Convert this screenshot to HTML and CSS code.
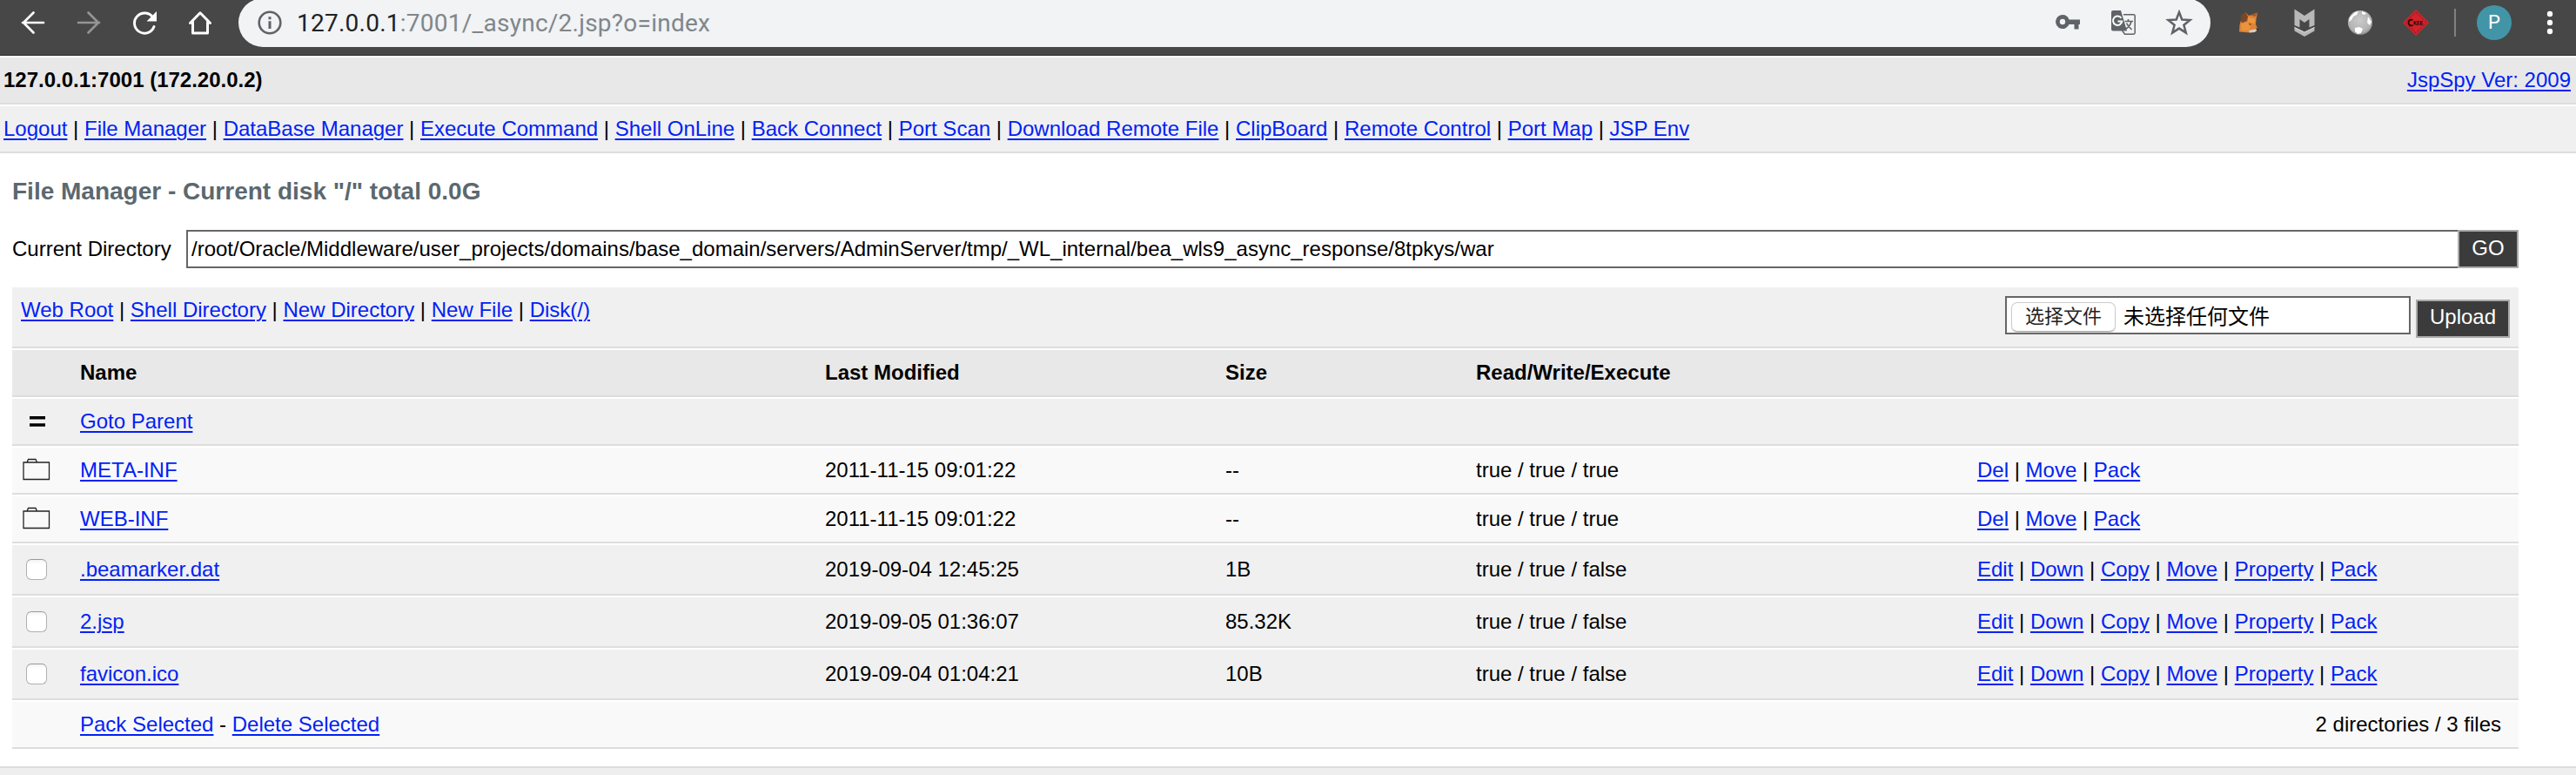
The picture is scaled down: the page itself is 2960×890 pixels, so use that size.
FILE: index.html
```html
<!DOCTYPE html>
<html lang="zh-CN">
<head>
<meta charset="utf-8">
<title>JspSpy</title>
<link rel="stylesheet" href="styles.css">
</head>
<body>
<header class="toolbar">
  <div class="cell"><svg width="28" height="28" viewBox="0 0 28 28" fill="none" stroke="#fff" stroke-width="2.7" stroke-linecap="round"><path d="M26 14H2M14.500 2.500L3 14L14.500 25.500"/></svg></div>
  <div class="cell"><svg width="28" height="28" viewBox="0 0 28 28" fill="none" stroke="#949494" stroke-width="2.700" stroke-linecap="round"><path d="M2 14H26M13.500 2.500L25 14L13.500 25.500"/></svg></div>
  <div class="cell"><svg width="28" height="28" viewBox="0 0 28 28" fill="none"><path d="M23.800 8.200A11.600 11.600 0 1 0 25 18.500" stroke="#fff" stroke-width="2.900" stroke-linecap="round"/><path d="M28 1V12.500H16.500Z" fill="#fff"/></svg></div>
  <div class="cell"><svg width="28" height="28" viewBox="0 0 28 28" fill="none" stroke="#fff" stroke-width="3" stroke-linejoin="round" stroke-linecap="round"><path d="M2.500 14.500L14 2.800L25.500 14.500M5.500 13V26H22.500V13"/></svg></div>
  <div class="omnibox">
    <svg class="info" width="28" height="28" viewBox="0 0 28 28"><circle cx="14" cy="14" r="12.300" fill="none" stroke="#5f6368" stroke-width="2.600"/><path d="M12.500 7.300h3v3h-3zM12.500 12.300h3v8.700h-3z" fill="#5f6368"/></svg>
    <span class="url"><b>127.0.0.1</b>:7001/_async/2.jsp?o=index</span>
    <div class="cell"><svg width="28" height="28" viewBox="0 0 28 28" fill="#5f6368"><path fill-rule="evenodd" d="M8 5a8 8 0 1 0 7.500 11H21.500v5.500h5V16H28v-5.500H15.500A8 8 0 0 0 8 5zM8 9.800a3.200 3.200 0 1 1 0 6.400a3.200 3.200 0 0 1 0-6.400z"/></svg></div>
    <div class="cell"><svg width="28" height="28" viewBox="0 0 28 28"><path d="M14 4.700H25.500A1.700 1.700 0 0 1 27.200 6.400V25.500A1.700 1.700 0 0 1 25.500 27.200H15.500L12.500 23" fill="#f1f3f4" stroke="#5f6368" stroke-width="1.500"/><path d="M2 0H11L18 23.500H2A2 2 0 0 1 0 21.500V2A2 2 0 0 1 2 0Z" fill="#5f6368"/><path d="M11.500 8.800A5.200 5.200 0 1 0 12.300 12.500H7.500" fill="none" stroke="#fff" stroke-width="2"/><path d="M15.500 12.500H25M19.500 10V12.500M23 12.500C22 17 19 20 15.800 21.700M17.500 14.500C19 18 21.500 20 23.500 22" fill="none" stroke="#5f6368" stroke-width="1.600"/></svg></div>
    <div class="cell"><svg width="32" height="30" viewBox="0 0 32 30"><path d="M16 3L19.300 11.500L28.500 12L21.400 17.800L23.800 26.600L16 21.600L8.200 26.600L10.600 17.800L3.500 12L12.700 11.500Z" fill="none" stroke="#5f6368" stroke-width="2.500"/></svg></div>
  </div>
  <div class="extensions">
    <div class="cell"><svg width="24" height="26" viewBox="0 0 24 26"><path d="M3 10L8 1L12 5L22 1.500L20.500 9L20 15L22.500 20.500L19 23L13 24.500L1 23.500L1.500 16Z" fill="#df8336"/><path d="M3 12L3 5L8 .500L11 6L10 11L5 13Z" fill="#7a4726"/><path d="M13.500 4.500L22.500 1.500L19.500 6Z" fill="#a05a2b"/><path d="M11 7L20 9L18 14L11 12Z" fill="#f0963f"/><path d="M3 15L10 12L14 18L12 22L4 22Z" fill="#ea9440"/><path d="M12 22L19 20.500L22 21L19 24L13 24.500Z" fill="#d8cdc4"/><path d="M20 19.500L23 20L22 22Z" fill="#151515"/><path d="M12 14L15 14.500L13.500 16Z" fill="#6b4021"/></svg></div>
    <div class="cell"><svg width="24" height="32" viewBox="0 0 24 32"><path d="M.500.500L12 8L23.500.500V19L17.500 21.500V12L12 16L6.500 12V21.500L.500 19Z" fill="#b8b8b8"/><path d="M.500 21L12 27L23.500 21V25.500L12 32L.500 25.500Z" fill="#b8b8b8"/><path d="M.500 21.500L12 27L23.500 21.500" fill="none" stroke="#ddd"/></svg></div>
    <div class="cell"><svg width="30" height="30" viewBox="0 0 30 30"><defs><radialGradient id="ball" cx=".48" cy=".4" r=".6"><stop offset="0" stop-color="#cacaca"/><stop offset=".8" stop-color="#b2b2b2"/><stop offset="1" stop-color="#8a8a8a"/></radialGradient></defs><circle cx="15" cy="15" r="14" fill="url(#ball)"/><path d="M3 9L9 3L13 2L11 6L7 8L5 12L2 14ZM17 2L22 4L20 6L17 5ZM24 8L28 14L26 18L23 15ZM9 21L14 20L18 22L16 27L12 28L9 25Z" fill="#fff"/></svg></div>
    <div class="cell"><svg width="32" height="32" viewBox="0 0 32 32"><path d="M16 1L31 16L16 31L1 16Z" fill="#d3222a"/><path d="M16 4L28 16L16 28L4 16Z" fill="none" stroke="#5a1518" stroke-width=".9" stroke-dasharray="1 1"/><path d="M12.500 13A3.400 3.400 0 1 0 12.500 19" stroke="#140808" stroke-width="1.800" fill="none"/><text x="13" y="18.500" textLength="11" lengthAdjust="spacingAndGlyphs" class="badge">KEE</text></svg></div>
  </div>
  <i class="divider"></i>
  <span class="avatar">P</span>
  <svg class="dots" width="8" height="28" viewBox="0 0 8 28" fill="#fff"><circle cx="4" cy="4" r="3.200"/><circle cx="4" cy="14" r="3.200"/><circle cx="4" cy="24" r="3.200"/></svg>
</header>

<div class="bar bar-host"><b>127.0.0.1:7001 (172.20.0.2)</b><a href="#">JspSpy Ver: 2009</a></div>
<nav class="bar bar-nav"><span><a href="#">Logout</a> | <a href="#">File Manager</a> | <a href="#">DataBase Manager</a> | <a href="#">Execute Command</a> | <a href="#">Shell OnLine</a> | <a href="#">Back Connect</a> | <a href="#">Port Scan</a> | <a href="#">Download Remote File</a> | <a href="#">ClipBoard</a> | <a href="#">Remote Control</a> | <a href="#">Port Map</a> | <a href="#">JSP Env</a></span></nav>

<main class="content">
  <h2 class="title">File Manager - Current disk "/" total 0.0G</h2>
  <div class="directory">
    <span class="directory-label">Current Directory</span>
    <div class="path">/root/Oracle/Middleware/user_projects/domains/base_domain/servers/AdminServer/tmp/_WL_internal/bea_wls9_async_response/8tpkys/war</div>
    <div class="button go">GO</div>
  </div>

  <div class="table">
    <div class="row tools">
      <span class="tool-links"><a href="#">Web Root</a> | <a href="#">Shell Directory</a> | <a href="#">New Directory</a> | <a href="#">New File</a> | <a href="#">Disk(/)</a></span>
      <div class="file"><span class="choose">选择文件</span><span class="chosen">未选择任何文件</span></div>
      <div class="button upload">Upload</div>
    </div>
    <div class="row head"><span></span><b>Name</b><b>Last Modified</b><b>Size</b><b>Read/Write/Execute</b></div>
    <div class="row"><svg class="icon" width="18" height="14" viewBox="0 0 18 14"><path d="M0 1h18v3.500H0zM0 9.300h18v3.500H0z"/></svg><span><a href="#">Goto Parent</a></span></div>
    <div class="row light"><svg class="icon folder" width="32" height="26" viewBox="0 0 32 26"><path d="M1 5H30.500V24.500H1ZM5 5L6.500 1.500H15L16.500 5" fill="none" stroke="#222" stroke-width="1.300"/></svg><span><a href="#">META-INF</a></span><span>2011-11-15 09:01:22</span><span>--</span><span>true / true / true</span><span><a href="#">Del</a> | <a href="#">Move</a> | <a href="#">Pack</a></span></div>
    <div class="row light"><svg class="icon folder" width="32" height="26" viewBox="0 0 32 26"><path d="M1 5H30.500V24.500H1ZM5 5L6.500 1.500H15L16.500 5" fill="none" stroke="#222" stroke-width="1.300"/></svg><span><a href="#">WEB-INF</a></span><span>2011-11-15 09:01:22</span><span>--</span><span>true / true / true</span><span><a href="#">Del</a> | <a href="#">Move</a> | <a href="#">Pack</a></span></div>
    <div class="row tall"><i class="check"></i><span><a href="#">.beamarker.dat</a></span><span>2019-09-04 12:45:25</span><span>1B</span><span>true / true / false</span><span><a href="#">Edit</a> | <a href="#">Down</a> | <a href="#">Copy</a> | <a href="#">Move</a> | <a href="#">Property</a> | <a href="#">Pack</a></span></div>
    <div class="row tall"><i class="check"></i><span><a href="#">2.jsp</a></span><span>2019-09-05 01:36:07</span><span>85.32K</span><span>true / true / false</span><span><a href="#">Edit</a> | <a href="#">Down</a> | <a href="#">Copy</a> | <a href="#">Move</a> | <a href="#">Property</a> | <a href="#">Pack</a></span></div>
    <div class="row tall"><i class="check"></i><span><a href="#">favicon.ico</a></span><span>2019-09-04 01:04:21</span><span>10B</span><span>true / true / false</span><span><a href="#">Edit</a> | <a href="#">Down</a> | <a href="#">Copy</a> | <a href="#">Move</a> | <a href="#">Property</a> | <a href="#">Pack</a></span></div>
    <div class="row light summary"><span><a href="#">Pack Selected</a> - <a href="#">Delete Selected</a></span><span>2 directories / 3 files</span></div>
  </div>
</main>
<footer class="footer"></footer>
</body>
</html>
```
FILE: styles.css
```css
* { box-sizing: border-box; }

body {
  margin: 0;
  height: 890px;
  overflow: hidden;
  background: #fff;
  color: #000;
  font: 24px/28px "Liberation Sans", Arial, "Noto Sans CJK SC", sans-serif;
  white-space: nowrap;
}

a {
  color: #0022f5;
  text-decoration: underline;
  text-decoration-thickness: 2px;
  text-underline-offset: 3px;
}

svg { display: block; flex: none; }

/* Browser toolbar */
.toolbar {
  display: flex;
  height: 64px;
  padding-left: 6px;
  background: #474747;
  border-bottom: 1px solid #2b2b2b;
}

.cell {
  flex: none;
  display: flex;
  align-items: center;
  justify-content: center;
  width: 64px;
  height: 52px;
}

.omnibox {
  display: flex;
  align-items: center;
  width: 2266px;
  height: 56px;
  margin: -2px 0 0 12px;
  padding: 0 4px 0 22px;
  border-radius: 28px;
  background: #f1f3f4;
}

.info { margin-right: 17px; }

.url {
  flex: 1;
  padding-top: 2px;
  color: #80868b;
  font: 28px/32px Roboto, sans-serif;
  letter-spacing: 0.25px;
}

.url b { color: #202124; font-weight: 400; }

.extensions { display: flex; margin-left: 12px; }

.badge { font: bold 7px "Liberation Sans", sans-serif; fill: #140808; }

.divider { width: 2px; height: 32px; margin: 10px 24px 0 12px; background: #808080; }

.avatar {
  width: 40px;
  height: 40px;
  margin-top: 6px;
  border-radius: 50%;
  background: #4195a7;
  color: #fff;
  font: 22px/40px Roboto, sans-serif;
  text-align: center;
}

.dots { margin: 12px 0 0 40px; }

/* Page bars */
.bar {
  display: flex;
  align-items: center;
  justify-content: space-between;
  height: 54px;
  margin-top: 2px;
  padding: 0 6px 0 4px;
  border-bottom: 2px solid #ddd;
}

.bar-host { background: #e8e8e8; }
.bar-nav { background: #f0f0f0; }

/* File manager */
.content { width: 2894px; padding: 28px 0 0 14px; }

.title {
  margin: 0;
  color: #5b686f;
  font-size: 28px;
  line-height: 32px;
}

.directory { display: flex; align-items: center; margin-top: 28px; }
.directory-label { width: 200px; }

.path {
  flex: 1;
  height: 44px;
  padding-left: 4px;
  border: 2px solid #666;
  border-right: 0;
  line-height: 40px;
}

.button {
  height: 44px;
  border: 2px solid #aaa;
  background: #3b3b3b;
  color: #fff;
  line-height: 37px;
  text-align: center;
}

.go { width: 70px; }

.table { margin-top: 22px; }

.row {
  display: grid;
  grid-template-columns: 78px 856px 460px 288px 576px 1fr;
  align-items: center;
  height: 54px;
  margin-bottom: 2px;
  border-bottom: 2px solid #ddd;
  background: #f0f0f0;
}

.head { background: #e8e8e8; }
.light { background: #f9f9f9; }
.tall { height: 58px; }

.tools {
  display: flex;
  align-items: flex-start;
  height: 70px;
  padding: 10px 10px 0;
}

.tool-links { flex: 1; margin-top: 2px; }

.file {
  display: flex;
  align-items: center;
  gap: 9px;
  width: 466px;
  height: 44px;
  padding-left: 5px;
  border: 2px solid #666;
  background: #fff;
}

.choose {
  width: 120px;
  height: 34px;
  margin-top: 4px;
  border: 1px solid #ccc;
  border-bottom-color: #aaa;
  border-radius: 7px;
  box-shadow: 0 1px 1px #ccc;
  font-size: 22px;
  line-height: 32px;
  text-align: center;
  color: #222;
}

.chosen { padding-top: 3px; }

.upload { width: 108px; margin: 4px 0 0 6px; line-height: 35px; }

.icon { margin-left: 20px; }
.folder { margin: -2px 0 0 12px; }

.check {
  width: 24px;
  height: 24px;
  margin-left: 16px;
  border: 1px solid #b0b0b0;
  border-top-color: #999;
  border-radius: 6px;
  background: linear-gradient(#f3f3f3, #fff 5px);
}

.summary {
  display: flex;
  justify-content: space-between;
  margin-bottom: 0;
  padding: 0 20px 0 78px;
}

.footer { height: 10px; margin-top: 20px; border-top: 2px solid #ddd; background: #eee; }
```
